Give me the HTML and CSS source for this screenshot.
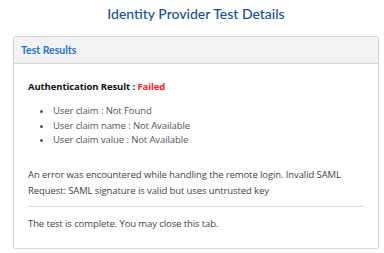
FILE: index.html
```html
<!DOCTYPE html>
<html lang="en">
<head>
    <meta charset="UTF-8">
    <meta name="viewport" content="width=device-width, initial-scale=1.0">
    <title>Identity Provider Test Details</title>
<link rel="stylesheet" href="styles.css">
</head>
<body>
    <div class="page">
        <h1 class="page-title">Identity Provider Test Details</h1>

        <div class="card">
            <div class="card-header">Test Results</div>
            <div class="card-body">
                <p class="result">Authentication Result : <span class="failed">Failed</span></p>
                <ul class="claims">
                    <li>User claim : Not Found</li>
                    <li>User claim name : Not Available</li>
                    <li>User claim value : Not Available</li>
                </ul>
                <p class="error-msg">An error was encountered while handling the remote login. Invalid SAML Request: SAML signature is valid but uses untrusted key</p>
                <hr class="divider">
                <p class="done-msg">The test is complete. You may close this tab.</p>
            </div>
        </div>
    </div>
</body>
</html>
```

FILE: styles.css
```css
body {
    margin: 0;
    background: #ffffff;
    font-family: 'Open Sans', 'Liberation Sans', sans-serif;
    overflow: hidden;
}

.page {
    width: 366px;
    margin-left: 13px;
}

.page-title {
    margin: 0;
    padding-top: 5px;
    height: 36px;
    box-sizing: border-box;
    text-align: center;
    font-family: 'Lato', 'Liberation Sans', sans-serif;
    font-size: 14px;
    font-weight: 500;
    line-height: 18px;
    color: #1a4f99;
}

.card {
    border: 1px solid #d4d8dd;
    border-radius: 3px;
    box-shadow: 0 1px 1px rgba(0,0,0,0.06);
    background: white;
}

.card-header {
    height: 26px;
    padding-left: 7px;
    background: #f3f3f3;
    border-bottom: 1px solid #d4d8dd;
    border-radius: 3px 3px 0 0;
    font-family: 'Lato', 'Liberation Sans', sans-serif;
    font-size: 10.5px;
    font-weight: 700;
    line-height: 27px;
    color: #2a6fc9;
}

.card-body {
    padding: 15px 14px 17px 14px;
    font-size: 9.5px;
    letter-spacing: -0.1px;
    line-height: 15px;
    color: #444;
}

.card-body p {
    margin: 0;
}

.result {
    font-weight: 700;
    color: #111;
}

.failed {
    color: #ff1a1a;
}

.claims {
    margin: 10px 0 0 0;
    padding-left: 25px;
    line-height: 14.5px;
    color: #555;
}

.error-msg {
    margin-top: 19px !important;
    line-height: 16px;
    color: #444;
}

.divider {
    margin: 7px 0 9px 0;
    border: none;
    border-top: 1px solid #dcdcdc;
}

.done-msg {
    color: #444;
}
```
